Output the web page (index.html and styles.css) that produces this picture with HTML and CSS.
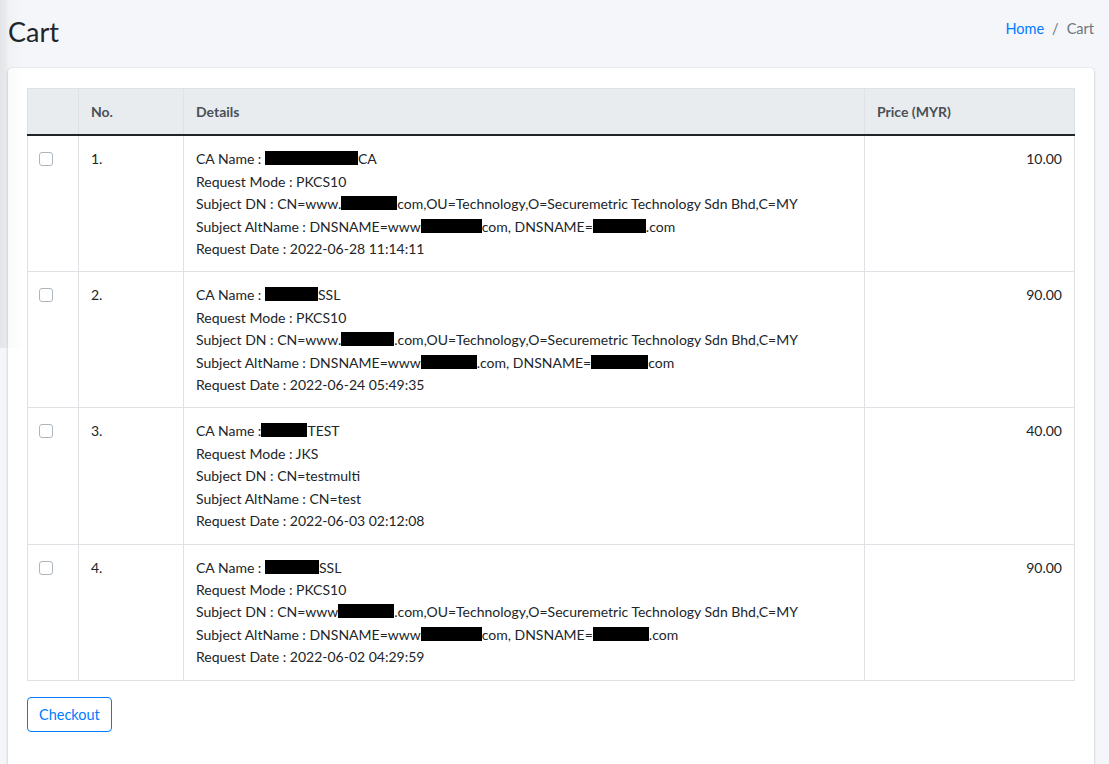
FILE: index.html
```html
<!DOCTYPE html>
<html lang="en">
<head>
<meta charset="utf-8">
<title>Cart</title>
<link rel="stylesheet" href="styles.css">
</head>
<body>
<div class="sidebar-shadow"></div>
<div class="content-header">
  <h1 class="page-title">Cart</h1>
  <ol class="breadcrumb">
    <li><a href="#" class="crumb-link">Home</a></li>
    <li class="crumb-sep">/</li>
    <li class="crumb-active">Cart</li>
  </ol>
</div>
<div class="card">
  <div class="card-body">
    <table class="cart-table">
      <thead>
        <tr>
          <th class="col-check"></th>
          <th class="col-no">No.</th>
          <th class="col-details">Details</th>
          <th class="col-price">Price (MYR)</th>
        </tr>
      </thead>
      <tbody>
        <tr>
          <td class="col-check"><span class="checkbox"></span></td>
          <td>1.</td>
          <td>
            <div>CA Name : <span class="redact w93"></span>CA</div>
            <div>Request Mode : PKCS10</div>
            <div>Subject DN : CN=www.<span class="redact w56"></span>com,OU=Technology,O=Securemetric Technology Sdn Bhd,C=MY</div>
            <div>Subject AltName : DNSNAME=www<span class="redact w61"></span>com, DNSNAME=<span class="redact w53"></span>.com</div>
            <div>Request Date : 2022-06-28 11:14:11</div>
          </td>
          <td class="price">10.00</td>
        </tr>
        <tr>
          <td class="col-check"><span class="checkbox"></span></td>
          <td>2.</td>
          <td>
            <div>CA Name : <span class="redact w53"></span>SSL</div>
            <div>Request Mode : PKCS10</div>
            <div>Subject DN : CN=www.<span class="redact w53"></span>.com,OU=Technology,O=Securemetric Technology Sdn Bhd,C=MY</div>
            <div>Subject AltName : DNSNAME=www<span class="redact w56"></span>.com, DNSNAME=<span class="redact w57"></span>com</div>
            <div>Request Date : 2022-06-24 05:49:35</div>
          </td>
          <td class="price">90.00</td>
        </tr>
        <tr>
          <td class="col-check"><span class="checkbox"></span></td>
          <td>3.</td>
          <td>
            <div>CA Name :<span class="redact w46"></span>TEST</div>
            <div>Request Mode : JKS</div>
            <div>Subject DN : CN=testmulti</div>
            <div>Subject AltName : CN=test</div>
            <div>Request Date : 2022-06-03 02:12:08</div>
          </td>
          <td class="price">40.00</td>
        </tr>
        <tr>
          <td class="col-check"><span class="checkbox"></span></td>
          <td>4.</td>
          <td>
            <div>CA Name : <span class="redact w54"></span>SSL</div>
            <div>Request Mode : PKCS10</div>
            <div>Subject DN : CN=www<span class="redact w56"></span>.com,OU=Technology,O=Securemetric Technology Sdn Bhd,C=MY</div>
            <div>Subject AltName : DNSNAME=www<span class="redact w61"></span>com, DNSNAME=<span class="redact w56"></span>.com</div>
            <div>Request Date : 2022-06-02 04:29:59</div>
          </td>
          <td class="price">90.00</td>
        </tr>
      </tbody>
    </table>
    <button class="btn-checkout" type="button">Checkout</button>
  </div>
</div>
</body>
</html>
```

FILE: styles.css
```css
* { box-sizing: border-box; }

html, body {
  margin: 0;
  padding: 0;
}

body {
  background: #f4f6f9;
  font-family: "Lato", "Source Sans Pro", "Liberation Sans", sans-serif;
  font-size: 14px;
  line-height: 22.4px;
  color: #212529;
  padding: 0 15px 0 8px;
  position: relative;
  overflow: hidden;
  height: 764px;
}

.sidebar-shadow {
  position: absolute;
  left: 0;
  top: 0;
  width: 24px;
  height: 348px;
  background: linear-gradient(to right, rgba(0,0,0,0.07) 0, rgba(0,0,0,0.05) 6px, rgba(0,0,0,0.02) 8px, rgba(0,0,0,0) 24px);
  pointer-events: none;
  z-index: 5;
}

.content-header {
  display: flex;
  justify-content: space-between;
  align-items: flex-start;
  height: 68px;
}

.page-title {
  margin: 16px 0 0;
  font-size: 27px;
  font-weight: 400;
  line-height: 1.2;
  color: #212529;
}

.breadcrumb {
  display: flex;
  list-style: none;
  margin: 18px 0 0;
  padding: 0;
  font-size: 14.5px;
  gap: 8px;
}

.crumb-link {
  color: #007bff;
  text-decoration: none;
}

.crumb-sep,
.crumb-active {
  color: #6c757d;
}

.card {
  background: #fff;
  border-radius: 4px;
  box-shadow: 0 0 1px rgba(0,0,0,0.125), 0 1px 3px rgba(0,0,0,0.2);
  min-height: 720px;
}

.card-body {
  padding: 20px 19px;
}

.cart-table {
  width: 100%;
  border-collapse: collapse;
}

.cart-table th,
.cart-table td {
  border: 1px solid #dee2e6;
  padding: 12px 12px 11px;
  vertical-align: top;
  text-align: left;
}

.cart-table thead th {
  background: #e9ecef;
  color: #495057;
  font-weight: 700;
  border-bottom: 2px solid #212529;
  padding: 12px 12px 11px;
}

.col-check { width: 51px; }
.col-no { width: 105px; }
.col-price { width: 210px; }

.cart-table td.price {
  text-align: right;
}

.checkbox {
  display: inline-block;
  width: 14px;
  height: 14px;
  border: 1px solid #adb5bd;
  border-radius: 3px;
  background: #fff;
  margin: 4px 0 0 -1px;
  vertical-align: top;
}

.redact {
  display: inline-block;
  height: 14px;
  background: #000;
  vertical-align: -1px;
}

.w46 { width: 46px; }
.w53 { width: 53px; }
.w54 { width: 54px; }
.w56 { width: 56px; }
.w57 { width: 57px; }
.w61 { width: 61px; }
.w93 { width: 93px; }

.btn-checkout {
  margin-top: 16px;
  height: 35px;
  padding: 0 11px;
  background: #fff;
  border: 1px solid #007bff;
  border-radius: 4px;
  color: #007bff;
  font-family: inherit;
  font-size: 14.5px;
  cursor: pointer;
}
```
